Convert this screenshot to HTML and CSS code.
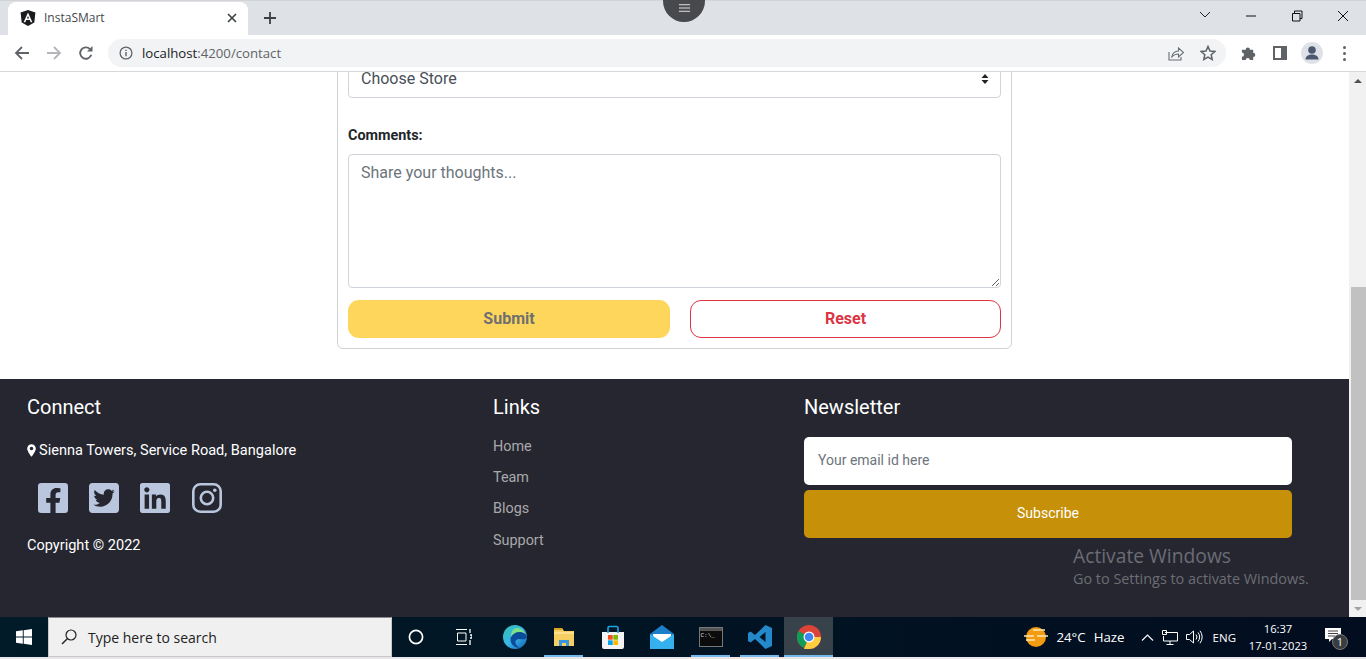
FILE: index.html
```html
<!DOCTYPE html>
<html lang="en">
<head>
<meta charset="utf-8">
<title>InstaSMart</title>
<link rel="stylesheet" href="styles.css">
</head>
<body>
<div class="window">
  <header class="chrome">
    <div class="tabstrip">
      <div class="tab">
        <svg class="favicon" viewBox="0 0 16 16"><path d="M8 0 .6 2.6l1.1 9.8L8 16l6.3-3.6 1.1-9.8z" fill="#1b1b1f"/><path d="M8 2.6 3.6 12.2h1.7l.9-2.2h3.6l.9 2.2h1.7zM6.9 8.6 8 5.9l1.1 2.7z" fill="#fff"/></svg>
        <span class="tab-title">InstaSMart</span>
        <svg class="tab-close" viewBox="0 0 10 10"><path d="M1 1l8 8M9 1l-8 8" stroke="#3c4043" stroke-width="1.6"/></svg>
      </div>
      <svg class="newtab" viewBox="0 0 12 12"><path d="M6 0v12M0 6h12" stroke="#3c4043" stroke-width="1.8"/></svg>
      <div class="win-controls">
        <svg class="wc" viewBox="0 0 46 30"><path d="M18 11l5 5 5-5" fill="none" stroke="#222" stroke-width="1"/></svg>
        <svg class="wc" viewBox="0 0 46 30"><path d="M18 15h10" stroke="#111" stroke-width="1"/></svg>
        <svg class="wc" viewBox="0 0 46 30"><path d="M18.500 12.500h7.500v7.500h-7.500zM20.500 12.500v-2.500h7.500v7.500h-2" fill="none" stroke="#111" stroke-width="1"/></svg>
        <svg class="wc" viewBox="0 0 46 30"><path d="M18 10l10 10M28 10l-10 10" stroke="#111" stroke-width="1"/></svg>
      </div>
    </div>
    <div class="toolbar">
      <svg class="nav back" viewBox="0 0 16 16"><path d="M15 8H2M8 2 2 8l6 6" fill="none" stroke="#5f6368" stroke-width="1.8"/></svg>
      <svg class="nav fwd" viewBox="0 0 16 16"><path d="M1 8h13M8 2l6 6-6 6" fill="none" stroke="#b4b6b9" stroke-width="1.8"/></svg>
      <svg class="nav reload" viewBox="0 0 16 16"><path d="M13.300 9.800A5.700 5.700 0 1 1 12 4.100" fill="none" stroke="#5f6368" stroke-width="1.800"/><path d="M14.500 1v5.500H9z" fill="#5f6368"/></svg>
      <div class="omnibox">
        <svg class="info" viewBox="0 0 14 14"><circle cx="7" cy="7" r="5.900" fill="none" stroke="#5f6368" stroke-width="1.300"/><path d="M7 6v4.200M7 3.700v1.400" stroke="#5f6368" stroke-width="1.400"/></svg>
        <span class="url"><span class="url-host">localhost</span>:4200/contact</span>
        <svg class="omni-share" viewBox="0 0 16 16"><path d="M1 7v8h12v-3" fill="none" stroke="#6a6d71" stroke-width="1.100"/><path d="M3.500 12.500C4.500 8 7.500 6 10.500 6V3l5 4.500-5 4.500V9C8 9 5.500 10 3.500 12.500z" fill="none" stroke="#6a6d71" stroke-width="1.100"/></svg>
        <svg class="omni-star" viewBox="0 0 16 16"><path d="m8 1.500 2 4.500 4.800.500-3.600 3.200 1 4.800L8 12.100l-4.200 2.400 1-4.800-3.600-3.200L6 6z" fill="none" stroke="#5f6368" stroke-width="1.500"/></svg>
      </div>
      <svg class="tool ext" viewBox="0 0 16 16"><path d="M1 4h4a2.300 2.300 0 0 1 4.600 0H13v3.200a2.300 2.300 0 0 1 0 4.600V15H9.400a2.200 2.200 0 0 0-4.400 0H1v-3.600a2.200 2.200 0 0 0 0-4.400z" fill="#5f6368"/></svg>
      <span class="tool sidepanel"><span class="sidepanel-fill"></span></span>
      <span class="avatar"><svg viewBox="0 0 22 22"><circle cx="11" cy="8" r="3.800" fill="#4c5870"/><path d="M4.500 17.500c0-3.500 3-5 6.500-5s6.500 1.500 6.500 5z" fill="#4c5870"/></svg></span>
      <span class="kebab"><i></i><i></i><i></i></span>
    </div>
    <div class="handle"><svg viewBox="0 0 14 10"><path d="M1 1.500h12M1 5h12M1 8.500h12" stroke="#eee" stroke-width="1"/></svg></div>
  </header>

  <div class="viewport">
    <main class="page">
      <section class="form-area">
        <form class="card">
          <div class="select-wrap">
            <select class="field select"><option>Choose Store</option></select>
            <svg class="select-arrows" viewBox="0 0 8 12"><path d="M4 1 7.500 5h-7zM4 11 .5 7h7z" fill="#222"/></svg>
          </div>
          <label class="label">Comments:</label>
          <textarea class="field textarea" placeholder="Share your thoughts..."></textarea>
          <div class="buttons">
            <button type="button" class="btn submit">Submit</button>
            <button type="button" class="btn reset">Reset</button>
          </div>
        </form>
      </section>
      <footer class="footer">
        <div class="col">
          <h4 class="foot-title">Connect</h4>
          <p class="address"><svg class="pin" viewBox="0 0 10 14"><path fill-rule="evenodd" d="M5 0a4.800 4.800 0 0 0-4.800 4.800C.2 8 5 14 5 14s4.800-6 4.800-9.200A4.800 4.800 0 0 0 5 0zm0 6.800a2 2 0 1 1 0-4 2 2 0 0 1 0 4z" fill="#fff"/></svg>Sienna Towers, Service Road, Bangalore</p>
          <div class="socials">
            <svg class="social" viewBox="0 32 448 448"><path d="M400 32H48A48 48 0 0 0 0 80v352a48 48 0 0 0 48 48h137.25V327.69h-63V256h63v-54.64c0-62.15 37-96.48 93.67-96.48 27.14 0 55.52 4.84 55.52 4.84v61h-31.27c-30.81 0-40.42 19.12-40.42 38.73V256h68.78l-11 71.69h-57.78V480H400a48 48 0 0 0 48-48V80a48 48 0 0 0-48-48z"/></svg>
            <svg class="social" viewBox="0 32 448 448"><path d="M400 32H48C21.500 32 0 53.500 0 80v352c0 26.500 21.500 48 48 48h352c26.500 0 48-21.500 48-48V80c0-26.500-21.500-48-48-48zm-48.900 158.800c.2 2.800.2 5.700.2 8.500 0 86.700-66 186.600-186.600 186.600-37.200 0-71.700-10.800-100.700-29.400 5.300.6 10.400.8 15.800.8 30.700 0 58.900-10.400 81.400-28-28.800-.6-53-19.500-61.300-45.500 10.100 1.500 19.200 1.500 29.600-1.200-30-6.100-52.500-32.500-52.500-64.400v-.8c8.700 4.900 18.900 7.900 29.600 8.300a65.447 65.447 0 0 1-29.200-54.600c0-12.200 3.200-23.400 8.900-33.100 32.300 39.800 80.800 65.800 135.200 68.600-9.300-44.500 24-80.600 64-80.600 18.900 0 35.900 7.900 47.900 20.700 14.800-2.800 29-8.300 41.600-15.800-4.900 15.200-15.200 28-28.600 36.200 13-1.400 25.600-5 37.400-10.200-8.800 13-19.900 24.500-32.600 33.700z"/></svg>
            <svg class="social" viewBox="0 32 448 448"><path d="M416 32H31.900C14.300 32 0 46.500 0 64.300v383.400C0 465.500 14.300 480 31.900 480H416c17.600 0 32-14.500 32-32.300V64.300c0-17.800-14.400-32.300-32-32.300zM135.400 416H69V202.200h66.500V416zm-33.200-243c-21.300 0-38.500-17.300-38.500-38.500S80.900 96 102.200 96c21.200 0 38.500 17.300 38.500 38.500 0 21.300-17.200 38.500-38.500 38.500zm282.100 243h-66.400V312c0-24.800-.5-56.700-34.500-56.700-34.600 0-39.900 27-39.900 54.900V416h-66.400V202.200h63.700v29.200h.9c8.900-16.800 30.600-29.300 62.900-29.300 67.200 0 79.700 44.300 79.700 101.900V416z"/></svg>
            <svg class="social social-ig" viewBox="0 0 30 30"><rect x="1.300" y="1.300" width="27.400" height="27.400" rx="7" fill="none" stroke-width="2.600"/><circle cx="15" cy="15" r="6.200" fill="none" stroke-width="2.600"/><circle cx="22.800" cy="7.200" r="1.800" class="ig-dot"/></svg>
          </div>
          <p class="copyright">Copyright © 2022</p>
        </div>
        <div class="col">
          <h4 class="foot-title">Links</h4>
          <ul class="links">
            <li>Home</li>
            <li>Team</li>
            <li>Blogs</li>
            <li>Support</li>
          </ul>
        </div>
        <div class="col">
          <h4 class="foot-title">Newsletter</h4>
          <input class="news-input" type="text" placeholder="Your email id here">
          <button type="button" class="news-btn">Subscribe</button>
        </div>
      </footer>
      <div class="activate">
        <div class="activate-title">Activate Windows</div>
        <div class="activate-sub">Go to Settings to activate Windows.</div>
      </div>
    </main>
    <aside class="scrollbar">
      <span class="sb-btn"><i class="sb-up"></i></span>
      <span class="sb-space"></span>
      <span class="sb-thumb"></span>
      <span class="sb-btn"><i class="sb-down"></i></span>
    </aside>
  </div>

  <div class="taskbar">
    <span class="start"><svg viewBox="0 0 16 16"><path d="M0 2.300 6.800 1.300v6.300H0zM7.700 1.200 16 0v7.600H7.700zM0 8.400h6.800v6.300L0 13.700zM7.700 8.400H16V16l-8.300-1.200z" fill="#fff"/></svg></span>
    <div class="search">
      <svg class="search-ico" viewBox="0 0 16 16"><circle cx="10" cy="6" r="5" fill="none" stroke="#222" stroke-width="1.200"/><path d="M6.300 9.700 1 15" stroke="#222" stroke-width="1.400"/></svg>
      <span>Type here to search</span>
    </div>
    <span class="tb-item shift-left"><svg class="ico16" viewBox="0 0 16 16"><circle cx="8" cy="8" r="6.600" fill="none" stroke="#fff" stroke-width="1.700"/></svg></span>
    <span class="tb-item shift-more"><svg class="ico16" viewBox="0 0 16 16"><path d="M0 .5h11M0 15.500h11M1.500 4h8.500v8H1.500z" fill="none" stroke="#fff" stroke-width="1"/><path d="M14 0v4M14 6h2v3h-2M14 11v5" fill="none" stroke="#fff" stroke-width="1.300"/></svg></span>
    <span class="tb-item"><svg class="ico24" viewBox="0 0 24 24"><defs><linearGradient id="edge" x1="0" y1="0" x2="1" y2="1"><stop offset="0" stop-color="#2fc4b2"/><stop offset=".5" stop-color="#3bb5e8"/><stop offset="1" stop-color="#0f5fb0"/></linearGradient></defs><circle cx="12" cy="12" r="12" fill="url(#edge)"/><path d="M24 13c0-4-4-6.500-7.500-6.500-5 0-9 3.500-9 8 0 5 4.500 9 9.500 8-3-1-5-3.500-4.500-6 .3-1.500 1.500-2.500 3.500-2.500 3 0 5 1 8-1z" fill="#0b4d9a"/><path d="M14 3c3 0 7 2 8.500 6-2-1.500-4-2-6-2-4 0-7 2-8.500 5C8 7 10 3 14 3z" fill="#7fe08a"/></svg></span>
    <span class="tb-item running"><svg class="ico24" viewBox="0 0 24 24"><path d="M2 3h8l2 3h10v15H2z" fill="#f6cf62"/><path d="M2 3h8l1 2H2z" fill="#d9a520"/><path d="M2 7h20v2H2z" fill="#ffe08a"/><path d="M7 15h10v6h-3v-3h-4v3H7z" fill="#3a96dd"/></svg></span>
    <span class="tb-item"><svg class="ico24" viewBox="0 0 24 24"><path d="M1 7h22v15a2 2 0 0 1-2 2H3a2 2 0 0 1-2-2z" fill="#f4f4f4"/><path d="M7 8V3a1.500 1.500 0 0 1 1.500-1.500h7A1.500 1.500 0 0 1 17 3v5" fill="none" stroke="#1aa7e6" stroke-width="1.600"/><path d="M7 10h4.700v4.700H7z" fill="#f25022"/><path d="M12.300 10H17v4.700h-4.700z" fill="#7fba00"/><path d="M7 15.300h4.700V20H7z" fill="#00a4ef"/><path d="M12.300 15.300H17V20h-4.700z" fill="#ffb900"/></svg></span>
    <span class="tb-item"><svg class="ico24" viewBox="0 0 24 24"><path d="M0 9 12 0l12 9v15H0z" fill="#1b7fc9"/><path d="M3 9h18v5l-9 5-9-5z" fill="#fff"/><path d="M0 9l12 8 12-8v15H0z" fill="#35b1ee"/></svg></span>
    <span class="tb-item running"><span class="cmd"><span class="cmd-bar"></span><span class="cmd-text">C:\_</span></span></span>
    <span class="tb-item running"><svg class="ico24" viewBox="0 0 24 24"><path d="M17.500 0 24 3v18l-6.500 3L7 14l-4.500 3.500L0 16v-8l2.500-1.500L7 10zM17.500 7 11.500 12l6 5z" fill="#2489ca"/></svg></span>
    <span class="tb-item running active"><svg class="ico24" viewBox="0 0 24 24"><circle cx="12" cy="12" r="12" fill="#db4437"/><path d="M12 12 1.600 6A12 12 0 0 0 7 22.900z" fill="#0f9d58"/><path d="M12 12h12a12 12 0 0 1-12 12H7z" fill="#ffcd40"/><circle cx="12" cy="12" r="5.500" fill="#fff"/><circle cx="12" cy="12" r="4.300" fill="#4285f4"/></svg></span>
    <div class="tray">
      <svg class="weather" viewBox="0 0 24 20"><circle cx="12" cy="10" r="10" fill="#f39c12"/><path d="M9 3h12M0 9h10M13 9h11M2 13h9" stroke="#fde9b5" stroke-width="1.500"/></svg>
      <span class="temp">24°C</span>
      <span class="haze">Haze</span>
      <svg class="tray-chev" viewBox="0 0 12 7"><path d="M.5 6.500 6 1l5.500 5.500" fill="none" stroke="#fff" stroke-width="1.100"/></svg>
      <svg class="tray-net" viewBox="0 0 16 15"><path d="M3 2.500h12.500V11H1.500V6M8 11v3M4.500 14.500h7" fill="none" stroke="#fff" stroke-width="1"/><path d="M.5.500h4v4h-4z" fill="none" stroke="#fff" stroke-width="1"/></svg>
      <svg class="tray-vol" viewBox="0 0 17 14"><path d="M.5 4.500h3l4-3.500v12l-4-3.500h-3z" fill="none" stroke="#fff" stroke-width="1"/><path d="M10 4.500a4 4 0 0 1 0 5M12 2.500a7 7 0 0 1 0 9M14 .8a10 10 0 0 1 0 12.400" fill="none" stroke="#fff" stroke-width="1"/></svg>
      <span class="lang">ENG</span>
      <span class="clock"><span>16:37</span><span>17-01-2023</span></span>
      <span class="notif">
        <svg class="notif-ico" viewBox="0 0 16 15"><path d="M0 0h16v11H7l-3 3v-3H0z" fill="#fff"/><path d="M3 3h10M3 5.500h10M3 8h7" stroke="#111" stroke-width=".8"/></svg>
        <span class="notif-count">1</span>
      </span>
    </div>
  </div>
</div>
</body>
</html>
```

FILE: styles.css
```css
* { box-sizing: border-box; }
html, body { margin: 0; height: 100%; overflow: hidden; }
body { font-family: Roboto, "Liberation Sans", sans-serif; background: #fff; }
.window { width: 1366px; height: 659px; display: flex; flex-direction: column; overflow: hidden; }

/* browser chrome */
.chrome { position: relative; height: 72px; flex: none; border-bottom: 1px solid #d6d8da; background: #fff; }
.tabstrip { height: 35px; background: #dee1e6; border-top: 1px solid #d2d4d7; display: flex; align-items: flex-end; }
.tab { position: relative; width: 240px; height: 33px; margin-left: 8px; background: #fff; border-radius: 8px 8px 0 0; display: flex; align-items: center; padding: 0 11px 2px 12px; }
.favicon { width: 16px; height: 16px; flex: none; }
.tab-title { font: 12px "Open Sans", sans-serif; color: #45484c; margin-left: 8px; flex: 1; }
.tab-close { width: 10px; height: 10px; }
.newtab { width: 12px; height: 12px; margin: 0 0 11px 16px; }
.win-controls { margin-left: auto; display: flex; align-self: flex-start; }
.wc { width: 46px; height: 30px; }
.toolbar { height: 36px; display: flex; align-items: center; padding-left: 14px; }
.nav { width: 16px; height: 16px; flex: none; }
.fwd { margin-left: 16px; }
.reload { margin-left: 16px; }
.omnibox { width: 1118px; height: 28px; margin-left: 14px; border-radius: 14px; background: #f1f3f4; display: flex; align-items: center; padding-left: 11px; }
.info { width: 14px; height: 14px; flex: none; }
.url { font: 13.200px "Open Sans", sans-serif; color: #5f6368; margin-left: 9px; flex: 1; }
.url-host { color: #202124; }
.omni-share { width: 16px; height: 16px; }
.omni-star { width: 16px; height: 16px; margin: 0 10px 0 16px; }
.tool { flex: none; }
.ext { width: 15px; height: 15px; margin-left: 15px; }
.sidepanel { width: 14px; height: 14px; margin-left: 17px; border: 2px solid #5f6368; display: flex; justify-content: flex-end; }
.sidepanel-fill { width: 4px; background: #5f6368; }
.avatar { width: 22px; height: 22px; margin-left: 14px; border-radius: 50%; background: #dee1e6; flex: none; }
.avatar svg { display: block; width: 22px; height: 22px; }
.kebab { margin-left: 20px; display: flex; flex-direction: column; gap: 3px; }
.kebab i { width: 3px; height: 3px; border-radius: 50%; background: #5f6368; }
.handle { position: absolute; left: 663px; top: 0; width: 42px; height: 22px; background: #48494c; border-radius: 0 0 21px 21px; display: flex; justify-content: center; padding-top: 3px; }
.handle svg { width: 13px; height: 10px; }

/* page */
.viewport { flex: 1; display: flex; min-height: 0; }
.page { position: relative; flex: 1; display: flex; flex-direction: column; overflow: hidden; min-width: 0; }
.form-area { height: 307px; flex: none; display: flex; justify-content: center; }
.card { width: 675px; height: 337px; margin-top: -60px; padding: 0 10px; border: 1px solid #cfd1d4; border-radius: 6px; }
.select-wrap { position: relative; margin-top: 47px; }
.field { display: block; width: 100%; border: 1px solid #ced4da; border-radius: 4px; background: #fff; font: 16px Roboto, sans-serif; color: #495057; padding: 0 12px; }
.select { height: 38px; padding-bottom: 2px; appearance: none; -webkit-appearance: none; outline: 0; }
.select-arrows { position: absolute; right: 12px; top: 13px; width: 8px; height: 12px; }
.label { display: block; margin-top: 29px; font: 700 14.400px/17px Roboto, sans-serif; color: #212529; }
.textarea { height: 134px; margin-top: 10px; padding-top: 9px; line-height: 18px; resize: vertical; outline: 0; }
.textarea::placeholder { color: #6c757d; opacity: 1; }
.buttons { display: flex; justify-content: space-between; margin-top: 12px; }
.btn { height: 38px; border-radius: 11px; padding: 0 0 2px; font: 700 16px Roboto, sans-serif; }
.submit { width: 322px; background: #ffd65c; border: 0; color: #6f6f70; }
.reset { width: 311px; background: #fff; border: 1px solid #dc3545; color: #dc3545; }

/* footer */
.footer { flex: 1; background: #25262f; display: grid; grid-template-columns: 466px 311px 488px; padding: 16px 0 0 27px; color: #fff; }
.foot-title { margin: 0; font: 400 20px/24px Roboto, sans-serif; color: #fff; }
.address { margin: 23px 0 0; font: 400 14.550px/17px Roboto, sans-serif; display: flex; align-items: center; }
.pin { width: 9px; height: 13px; margin-right: 3px; }
.socials { display: flex; gap: 21px; margin: 24px 0 0 11px; }
.social { width: 30px; height: 30px; fill: #b9c6dd; flex: none; }
.social-ig { fill: none; stroke: #b9c6dd; margin-left: 1px; }
.ig-dot { fill: #b9c6dd; stroke: none; }
.copyright { margin: 24px 0 0; font: 400 14.550px/17px Roboto, sans-serif; }
.links { list-style: none; margin: 19px 0 0; padding: 0; display: flex; flex-direction: column; gap: 14.200px; font: 400 14.400px/17px Roboto, sans-serif; color: #a9a9ac; }
.news-input { display: block; width: 488px; height: 48px; margin-top: 18px; border: 0; border-radius: 5px; padding: 0 14px 2px; font: 14px Roboto, sans-serif; background: #fff; outline: 0; }
.news-input::placeholder { color: #6c757d; opacity: 1; }
.news-btn { display: block; width: 488px; height: 48px; margin-top: 5px; border: 0; border-radius: 5px; padding: 0 0 2px; background: #c69008; color: #fff; font: 400 14px Roboto, sans-serif; }
.activate { position: absolute; left: 1073px; top: 472px; color: #6c6d75; font-family: "Open Sans", sans-serif; }
.activate-title { font-size: 19.250px; line-height: 24px; }
.activate-sub { font-size: 14.400px; line-height: 20px; margin-top: 1px; }

/* scrollbar */
.scrollbar { width: 17px; flex: none; background: #f1f1f1; display: flex; flex-direction: column; }
.sb-btn { height: 17px; flex: none; display: flex; align-items: center; justify-content: center; }
.sb-up { border: 4px solid transparent; border-top: 0; border-bottom: 4px solid #505050; }
.sb-down { border: 4px solid transparent; border-bottom: 0; border-top: 4px solid #a3a3a3; }
.sb-space { height: 198px; flex: none; }
.sb-thumb { flex: 1; background: #c1c1c1; margin-left: 2px; }

/* taskbar */
.taskbar { height: 42px; flex: none; display: flex; background: linear-gradient(90deg, #011b28, #020d1f); border-bottom: 2px solid #e8e6e8; color: #fff; }
.start { width: 48px; display: flex; align-items: center; justify-content: center; flex: none; }
.start svg { width: 16px; height: 16px; }
.search { width: 344px; flex: none; background: #f0f0f0; border: 1px solid #c8c8c8; border-top-color: #8a8a8a; display: flex; align-items: center; padding-left: 12px; font: 14px "Open Sans", sans-serif; color: #222; }
.search-ico { width: 16px; height: 16px; margin-right: 11px; }
.tb-item { width: 49px; flex: none; display: flex; align-items: center; justify-content: center; position: relative; }
.shift-left { padding-right: 2px; }
.shift-more { padding-right: 4px; }
.running::after { content: ""; position: absolute; left: 5px; right: 5px; bottom: 0; height: 2px; background: #76b9ed; }
.active { background: #37424b; }
.active::after { left: 0; right: 0; }
.ico16 { width: 16px; height: 16px; }
.ico24 { width: 24px; height: 24px; }
.cmd { width: 24px; height: 20px; background: #0c0c0c; border: 1px solid #777; display: block; overflow: hidden; }
.cmd-bar { display: block; height: 3px; background: #555; }
.cmd-text { display: block; font: 6px/10px "Liberation Mono", monospace; color: #ddd; padding-left: 1px; }
.tray { margin-left: auto; display: flex; align-items: center; font: 13.300px "Open Sans", sans-serif; }
.weather { width: 24px; height: 20px; }
.temp { margin-left: 8px; }
.haze { margin-left: 8px; }
.tray-chev { width: 13px; height: 7px; margin-left: 16px; }
.tray-net { width: 16px; height: 15px; margin-left: 8px; }
.tray-vol { width: 17px; height: 14px; margin-left: 8px; }
.lang { font-size: 11.500px; margin-left: 10px; }
.clock { width: 68px; margin-left: 8px; display: flex; flex-direction: column; align-items: center; font-size: 11.200px; line-height: 17px; }
.notif { position: relative; width: 24px; height: 24px; margin: 0 17px 0 13px; }
.notif-ico { display: block; width: 16px; height: 15px; margin-top: 3px; }
.notif-count { position: absolute; left: 7px; top: 9px; width: 16px; height: 16px; border-radius: 50%; background: #3a3d40; border: 1px solid #777; font: 11px/14px "Open Sans", sans-serif; text-align: center; }
```
